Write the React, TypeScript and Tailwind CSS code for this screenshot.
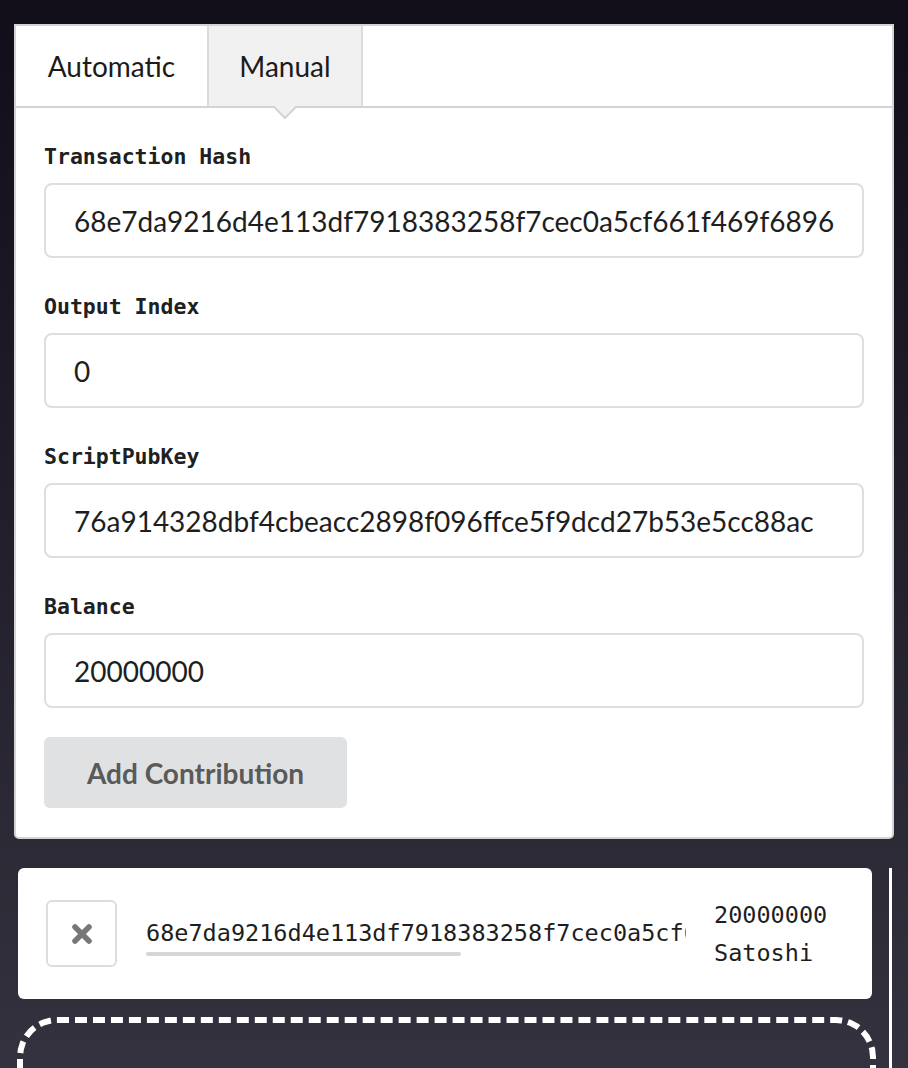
import React from "react"

const fields = [
  { label: "Transaction Hash", value: "68e7da9216d4e113df7918383258f7cec0a5cf661f469f68962c3e0b1a4d7f5e" },
  { label: "Output Index", value: "0" },
  { label: "ScriptPubKey", value: "76a914328dbf4cbeacc2898f096ffce5f9dcd27b53e5cc88ac" },
  { label: "Balance", value: "20000000" },
]

const lato = "font-['Lato','Liberation_Sans',sans-serif]"
const mono = "font-['DejaVu_Sans_Mono','Liberation_Mono',monospace]"

function Tabs() {
  return (
    <div className={`flex h-[82px] border-b-2 border-[#d4d4d4] text-[28px] text-[#1b1b1b] ${lato}`}>
      <div className="flex w-[191px] items-center justify-center">Automatic</div>
      <div className="relative flex w-[156px] items-center justify-center border-x-2 border-[#dcdcdc] bg-[#f1f1f1]">
        Manual
        <div className="absolute bottom-[-10px] left-1/2 h-[16px] w-[16px] -translate-x-1/2 rotate-45 border-r-2 border-b-2 border-[#d4d4d4] bg-[#f1f1f1]" />
      </div>
    </div>
  )
}

function Field({ label, value }: { label: string; value: string }) {
  return (
    <div className="flex flex-col">
      <label className={`mb-[12px] text-[21.5px] leading-[28px] font-bold text-[#202020] ${mono}`}>{label}</label>
      <input
        readOnly
        value={value}
        className={`h-[75px] w-full rounded-[8px] border-2 border-[#dedede] bg-white px-[28px] text-[28px] text-[#1e1e1e] outline-none ${lato}`}
      />
    </div>
  )
}

export default function App() {
  return (
    <div className="h-[1068px] overflow-hidden bg-linear-to-b from-[#110e19] to-[#35323f] px-[14px] pt-[24px]">
      <div className="rounded-b-[5px] border-2 border-[#d4d4d4] bg-white">
        <Tabs />
        <div className="flex flex-col gap-[35px] px-[28px] pt-[35px] pb-[29px]">
          {fields.map((f, i) => (
            <Field key={i} label={f.label} value={f.value} />
          ))}
          <div className="-mt-[6px]">
            <button className={`h-[71px] w-[303px] rounded-[6px] bg-[#e0e1e2] text-[28px] font-bold text-[#5a5a5a] ${lato}`}>
              Add Contribution
            </button>
          </div>
        </div>
      </div>

      <div className="mt-[29px] ml-[4px] mr-[2px] border-r-[3px] border-white pr-[17px]">
        <div className="flex h-[131px] items-center rounded-[6px] bg-white px-[28px]">
          <button className="flex h-[67px] w-[71px] shrink-0 items-center justify-center rounded-[6px] border-2 border-[#dddddd] bg-white text-[#777777]">
            <svg width="22" height="22" viewBox="0 0 22 22">
              <path d="M4 4 L18 18 M18 4 L4 18" stroke="#777777" strokeWidth="5.5" strokeLinecap="round" />
            </svg>
          </button>
          <div className="ml-[29px] flex w-[540px] shrink-0 flex-col">
            <div className={`overflow-hidden whitespace-nowrap pt-[6px] text-[23.5px] leading-[32px] text-[#1e1e1e] ${mono}`}>
              68e7da9216d4e113df7918383258f7cec0a5cf661f469f68962c3e0b1a4d7f5e
            </div>
            <div className="mt-[3px] h-[4px] w-[315px] rounded-full bg-[#d6d6d6]" />
          </div>
          <div className={`ml-[28px] flex flex-col gap-[8px] text-[23.5px] leading-[30px] text-[#1e1e1e] ${mono}`}>
            <div>20000000</div>
            <div>Satoshi</div>
          </div>
        </div>
        <div className="mt-[18px] -ml-[1px] -mr-[4px] h-[120px] rounded-[40px] border-[6px] border-dashed border-white" />
      </div>
    </div>
  )
}
